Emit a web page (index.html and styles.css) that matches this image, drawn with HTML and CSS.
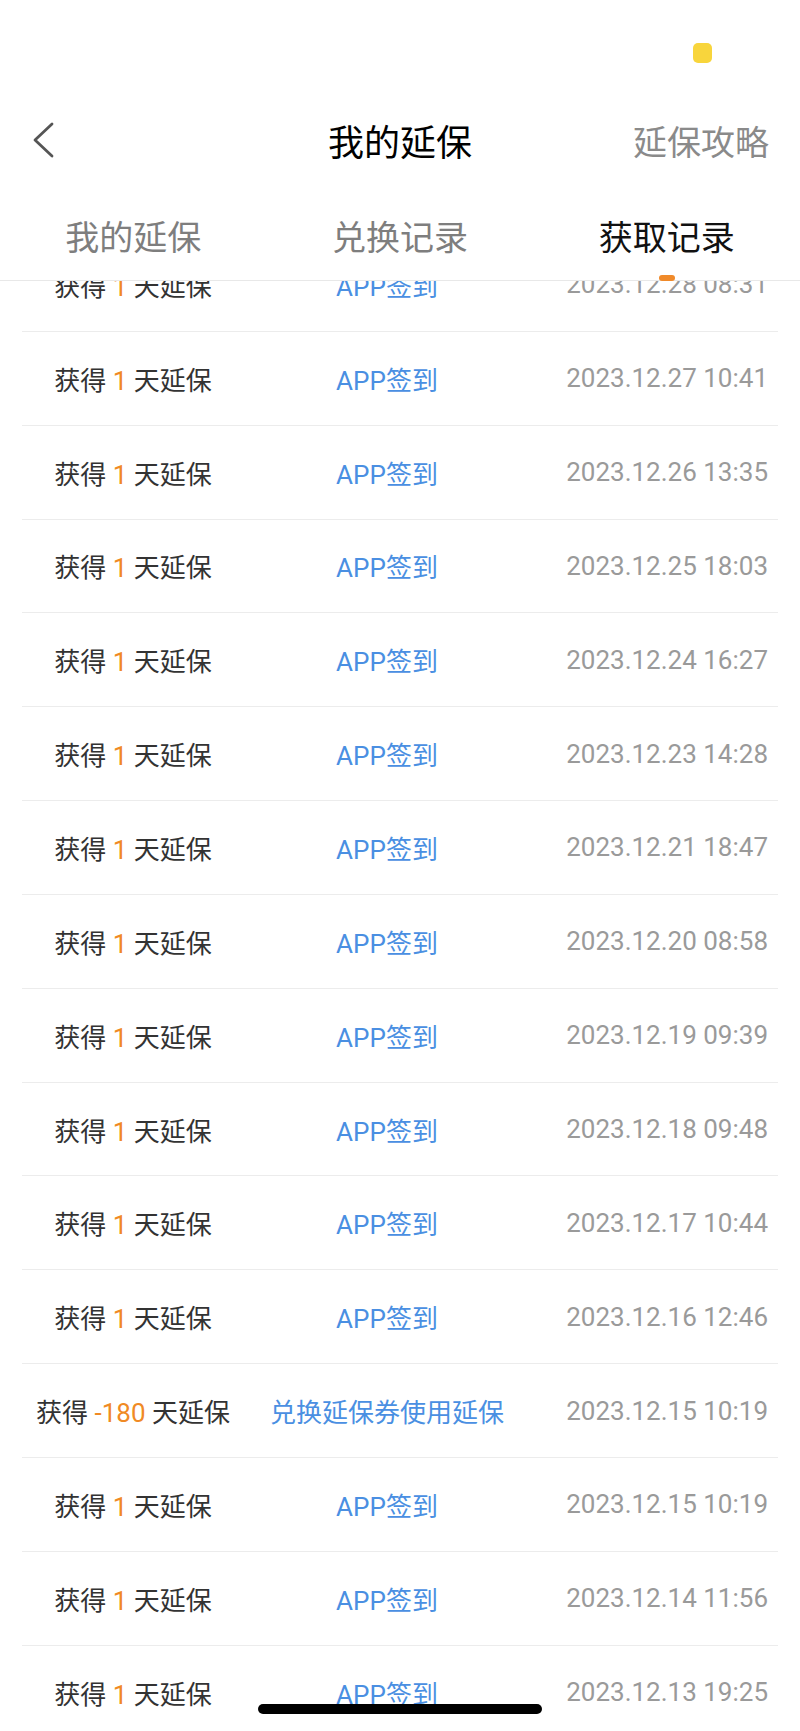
FILE: index.html
```html
<!DOCTYPE html>
<html lang="zh-CN">
<head>
  <meta charset="UTF-8" />
  <meta name="viewport" content="width=device-width, initial-scale=1.0"/>
  <title>我的延保</title>
  <link rel="stylesheet" href="styles.css">
</head>
<body>
  <div class="top">
    <div class="status"><span class="rec"></span></div>
    <div class="nav">
      <a class="back" href="#">
        <svg width="22" height="36" viewBox="0 0 22 36"><polyline points="20,2 3,18 20,34" fill="none" stroke="#555" stroke-width="2.8" stroke-linecap="round" stroke-linejoin="round"/></svg>
      </a>
      <h1>我的延保</h1>
      <a class="guide" href="#">延保攻略</a>
    </div>
    <div class="tabs">
      <div class="tab">我的延保</div>
      <div class="tab">兑换记录</div>
      <div class="tab active">获取记录</div>
    </div>
  </div>

  <ul class="list">
    <li class="row"><span class="what">获得 <em>1</em> 天延保</span><span class="src">APP签到</span><span class="time">2023.12.28 08:31</span></li>
    <li class="row"><span class="what">获得 <em>1</em> 天延保</span><span class="src">APP签到</span><span class="time">2023.12.27 10:41</span></li>
    <li class="row"><span class="what">获得 <em>1</em> 天延保</span><span class="src">APP签到</span><span class="time">2023.12.26 13:35</span></li>
    <li class="row"><span class="what">获得 <em>1</em> 天延保</span><span class="src">APP签到</span><span class="time">2023.12.25 18:03</span></li>
    <li class="row"><span class="what">获得 <em>1</em> 天延保</span><span class="src">APP签到</span><span class="time">2023.12.24 16:27</span></li>
    <li class="row"><span class="what">获得 <em>1</em> 天延保</span><span class="src">APP签到</span><span class="time">2023.12.23 14:28</span></li>
    <li class="row"><span class="what">获得 <em>1</em> 天延保</span><span class="src">APP签到</span><span class="time">2023.12.21 18:47</span></li>
    <li class="row"><span class="what">获得 <em>1</em> 天延保</span><span class="src">APP签到</span><span class="time">2023.12.20 08:58</span></li>
    <li class="row"><span class="what">获得 <em>1</em> 天延保</span><span class="src">APP签到</span><span class="time">2023.12.19 09:39</span></li>
    <li class="row"><span class="what">获得 <em>1</em> 天延保</span><span class="src">APP签到</span><span class="time">2023.12.18 09:48</span></li>
    <li class="row"><span class="what">获得 <em>1</em> 天延保</span><span class="src">APP签到</span><span class="time">2023.12.17 10:44</span></li>
    <li class="row"><span class="what">获得 <em>1</em> 天延保</span><span class="src">APP签到</span><span class="time">2023.12.16 12:46</span></li>
    <li class="row"><span class="what">获得 <em>-180</em> 天延保</span><span class="src">兑换延保券使用延保</span><span class="time">2023.12.15 10:19</span></li>
    <li class="row"><span class="what">获得 <em>1</em> 天延保</span><span class="src">APP签到</span><span class="time">2023.12.15 10:19</span></li>
    <li class="row"><span class="what">获得 <em>1</em> 天延保</span><span class="src">APP签到</span><span class="time">2023.12.14 11:56</span></li>
    <li class="row"><span class="what">获得 <em>1</em> 天延保</span><span class="src">APP签到</span><span class="time">2023.12.13 19:25</span></li>
  </ul>

  <div class="home-bar"></div>
</body>
</html>
```

FILE: styles.css
```css
body { margin: 0; background: #fff; font-family: Roboto, "Noto Sans CJK SC", sans-serif; color: #333; overflow: hidden; }
a { text-decoration: none; }

.top { position: fixed; top: 0; left: 0; right: 0; z-index: 5; background: #fff; border-bottom: 1px solid #e8e8e8; }
.status { height: 94px; box-sizing: border-box; padding: 43px 88px 0 0; display: flex; justify-content: flex-end; }
.rec { width: 19px; height: 20px; border-radius: 5px; background: #f8d53c; }

.nav { height: 92px; display: grid; grid-template-columns: 1fr auto 1fr; align-items: center; }
.back { padding-left: 32px; display: flex; align-items: center; }
.nav h1 { margin: 0; font-size: 36px; font-weight: 400; color: #000; }
.guide { justify-self: end; padding-right: 31px; font-size: 34px; color: #8a8a8a; }

.tabs { height: 94px; display: grid; grid-template-columns: 1fr 1fr 1fr; }
.tab { position: relative; display: flex; justify-content: center; align-items: center; padding-top: 4px; font-size: 34px; color: #7e7e7e; }
.tab.active { color: #111; }
.tab.active::after { content: ""; position: absolute; bottom: -1px; left: 50%; width: 16px; height: 6px; margin-left: -8px; border-radius: 3px; background: #f08a2a; }

.list { list-style: none; margin: 238px 22px 0; padding: 0; }
.row { box-sizing: border-box; height: 93.85px; display: grid; grid-template-columns: 222px 286px 1fr; align-items: center; border-bottom: 1px solid #ececec; font-size: 26px; white-space: nowrap; }
.what { text-align: center; color: #333; }
.what em { font-style: normal; color: #f08a24; }
.src { text-align: center; color: #4a8fe2; }
.time { text-align: right; padding-right: 10px; color: #9a9a9a; }

.home-bar { position: fixed; left: 258px; bottom: 17px; width: 284px; height: 10px; border-radius: 5px; background: #000; }
```
